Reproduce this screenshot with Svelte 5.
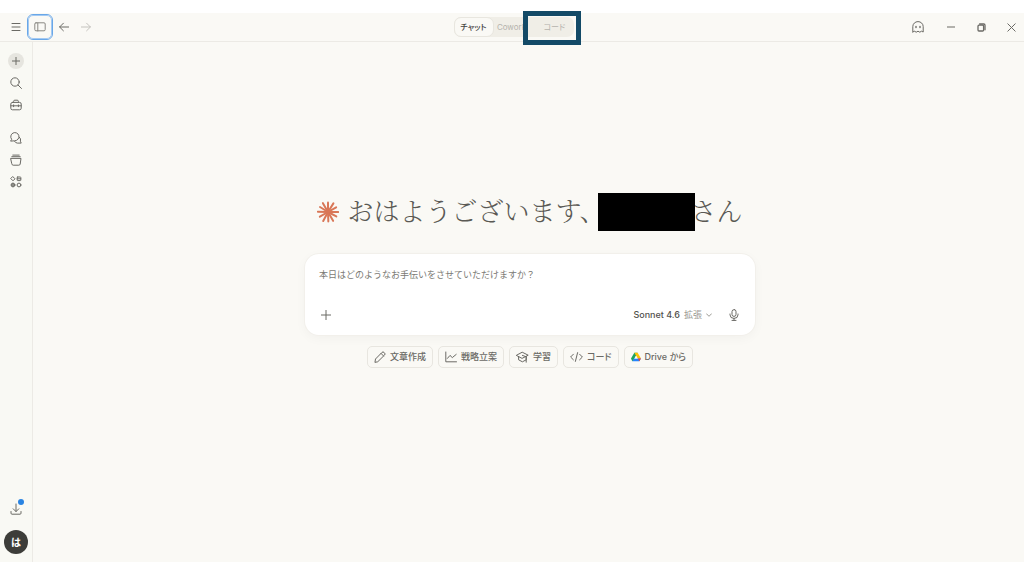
<script lang="ts">
    let message = $state('');
    let mode = $state('chat');
</script>

<div class="window">
    <header class="titlebar">
        <div class="tools">
            <button class="icon-btn" aria-label="メニュー">
                <svg width="10" height="10" viewBox="0 0 10 10"><path d="M1 1.5h8M1 5h8M1 8.5h8" /></svg>
            </button>
            <button class="icon-btn panel-btn" aria-label="サイドバー">
                <svg width="12" height="10" viewBox="0 0 12 10"><rect x="0.8" y="0.8" width="10.4" height="8" rx="1.2" /><path d="M3.8 1v8" /></svg>
            </button>
            <button class="icon-btn" aria-label="戻る">
                <svg width="10" height="10" viewBox="0 0 10 10"><path d="M9.8 5H.6M4.4 1.2.6 5l3.8 3.8" /></svg>
            </button>
            <button class="icon-btn faded" aria-label="進む">
                <svg width="10" height="10" viewBox="0 0 10 10"><path d="M.2 5h9.2M5.6 1.2 9.4 5 5.6 8.8" /></svg>
            </button>
        </div>

        <nav class="tabs">
            <button class="tab" class:active={mode === 'chat'} onclick={() => (mode = 'chat')}>チャット</button>
            <button class="tab" class:active={mode === 'cowork'} onclick={() => (mode = 'cowork')}>Cowork</button>
            <button class="tab code" class:active={mode === 'code'} onclick={() => (mode = 'code')}>コード</button>
            <span class="marker"></span>
        </nav>

        <div class="controls">
            <button class="icon-btn" aria-label="シークレットチャット">
                <svg width="12" height="12" viewBox="0 0 12 12"><path d="M.8 11V5.6a5.2 5 0 0 1 10.4 0V11l-1.7-.8-1.7 1-1.8-1-1.8 1-1.7-1z" /><path d="M4 5.4v1.2M8 5.4v1.2" stroke-width="1.4" /></svg>
            </button>
            <button class="icon-btn" aria-label="最小化">
                <svg width="8" height="8" viewBox="0 0 8 8"><path d="M.5 4h7" stroke-width="1.2" /></svg>
            </button>
            <button class="icon-btn" aria-label="元に戻す">
                <svg width="9" height="9" viewBox="0 0 9 9"><rect x="1" y="2.2" width="5.6" height="5.8" rx="1" stroke-width="1.3" /><path d="M2.6 1h4.2Q8 1 8 2.2v4.6" stroke-width="1.3" /></svg>
            </button>
            <button class="icon-btn" aria-label="閉じる">
                <svg width="9" height="9" viewBox="0 0 9 9"><path d="m.8.8 7.4 7.4M8.2.8.8 8.2" /></svg>
            </button>
        </div>
    </header>

    <div class="body">
        <aside class="sidebar">
            <button class="side-btn" aria-label="新規チャット">
                <span class="plus">
                    <svg width="8" height="8" viewBox="0 0 8 8"><path d="M4 0v8M0 4h8" /></svg>
                </span>
            </button>
            <button class="side-btn" aria-label="検索">
                <svg width="12" height="12" viewBox="0 0 12 12"><circle cx="5" cy="5" r="4.2" /><path d="m8 8 3.5 3.5" /></svg>
            </button>
            <button class="side-btn group-end" aria-label="カスタマイズ">
                <svg width="12" height="12" viewBox="0 0 12 12"><rect x=".8" y="3.4" width="10.4" height="7.4" rx="1.6" /><path d="M3.6 3.2V2.4q0-1.2 1.2-1.2h2.4q1.2 0 1.2 1.2v.8M.8 6.8h10.4M3.6 5.9v1.8M8.4 5.9v1.8" /></svg>
            </button>
            <button class="side-btn" aria-label="チャット一覧">
                <svg width="12" height="12" viewBox="0 0 12 12"><path d="M.8 8.8 1.7 7.3A4.1 4.1 0 1 1 5 8.8z" /><path d="M9.4 5.2a3.6 3.6 0 0 1 1 4l.8 1.9H7.4a3.4 3.4 0 0 1-2.8-1.7" /></svg>
            </button>
            <button class="side-btn" aria-label="プロジェクト">
                <svg width="12" height="12" viewBox="0 0 12 12"><path d="M1 4.4h10L10.2 10q-.2 1.2-1.4 1.2H3.2Q2 11.2 1.8 10zM1.8 2.7h8.4M2.8 1.1h6.4" /></svg>
            </button>
            <button class="side-btn" aria-label="アーティファクト">
                <svg width="12" height="12" viewBox="0 0 12 12"><path d="m3 .8 2 2-2 2-2-2z" /><rect x="7.2" y="1" width="3.6" height="3.6" rx=".5" /><path d="M7.2 2.8h3.6" /><circle cx="3" cy="9" r="1.9" /><path d="M3 7.3v3.4M1.3 9h3.4" /><circle cx="9" cy="9" r="1.9" /></svg>
            </button>

            <div class="side-bottom">
                <button class="side-btn download" aria-label="ダウンロード">
                    <svg width="12" height="12" viewBox="0 0 12 12"><path d="M6 1v7.400M3.2 5.8 6 8.6l2.800-2.800M1 8.5v1.700q0 1 1 1h8q1 0 1-1V8.5" /></svg>
                    <span class="dot"></span>
                </button>
                <button class="avatar">は</button>
            </div>
        </aside>

        <main>
            <h1>
                <svg class="spark" width="22" height="22" viewBox="-11 -11 22 22">
                    {#each [0, 28, 60, 88, 118, 150, 182, 212, 240, 270, 302, 330] as angle, i}
                        <path d="M0 0H{i % 2 ? 9.4 : 10.2}" transform="rotate({angle})" />
                    {/each}
                </svg>
                <span class="greeting">おはようございます、</span>
                <span class="redacted"></span>
                <span>さん</span>
            </h1>

            <div class="composer">
                <textarea aria-label="メッセージ" rows="1" placeholder="本日はどのようなお手伝いをさせていただけますか？" bind:value={message}></textarea>
                <div class="composer-row">
                    <button class="icon-btn" aria-label="追加">
                        <svg width="10" height="10" viewBox="0 0 10 10"><path d="M5 0v10M0 5h10" /></svg>
                    </button>
                    <button class="model">
                        Sonnet 4.6 <span>拡張</span>
                        <svg width="6" height="6" viewBox="0 0 6 6"><path d="m.5 1.8 2.500 2.500 2.500-2.500" /></svg>
                    </button>
                    <button class="icon-btn" aria-label="音声入力">
                        <svg width="10" height="12" viewBox="0 0 10 12"><rect x="3" y=".6" width="4" height="6.8" rx="2" /><path d="M1 5v.8a4 3.6 0 0 0 8 0V5M5 9.4v2M3 11.4h4" /></svg>
                    </button>
                </div>
            </div>

            <div class="chips">
                <button class="chip">
                    <svg width="12" height="12" viewBox="0 0 12 12"><path d="M1 11l.5-3L8 1.4q1-1 2 0l.6.6q1 1 0 2L4 10.5zM7 2.4l2.600 2.600" /></svg>
                    <span>文章作成</span>
                </button>
                <button class="chip">
                    <svg width="12" height="12" viewBox="0 0 12 12"><path d="M.8 1v9.800h10.700M2.4 7.4 5 4.4l2.300 2.200 3.900-3.200" /></svg>
                    <span>戦略立案</span>
                </button>
                <button class="chip">
                    <svg width="13" height="12" viewBox="0 0 13 12"><path d="M.6 4.2 6.2 1.2l6 3-5.800 3zM2.6 5.4v3.400l3.800 2 3.800-2V5.4M6.4 4.4l3.800 1.400v5.400" /></svg>
                    <span>学習</span>
                </button>
                <button class="chip">
                    <svg width="13" height="12" viewBox="0 0 13 12"><path d="M3.4 3.2.6 6l2.800 2.800M9.6 3.2 12.4 6 9.6 8.8M7.6 1.6 5.4 10.4" /></svg>
                    <span>コード</span>
                </button>
                <button class="chip drive">
                    <svg width="10" height="10" viewBox="0 0 12 11"><path fill="#1ea362" d="M4 .3h4L3 9.5 1.5 10.5 0 7.3z" /><path fill="#ffc107" d="M4 .3h4l4 7H8z" /><path fill="#2684fc" d="M3.6 7.3H12l-2 3.400H1.6z" /><path fill="#ea4335" d="M8.3 7.3H12l-2 3.400z" /><path fill="#faf9f5" d="M6 4 4 7.3h4z" /></svg>
                    <span>Drive から</span>
                </button>
            </div>
        </main>
    </div>
</div>

<style>
    :global(body) {
        background: #fff;
    }

    .window {
        box-sizing: border-box;
        display: flex;
        flex-direction: column;
        min-height: 100vh;
        border: solid #fff;
        border-width: 13px 0 14px;
        background: #faf9f5;
        color: #6b6a65;
        font-family: Inter, "Noto Sans CJK JP", sans-serif;
    }

    button {
        display: flex;
        align-items: center;
        justify-content: center;
        padding: 0;
        border: 0;
        background: none;
        color: inherit;
        font: inherit;
    }

    svg {
        flex: none;
        fill: none;
        stroke: currentColor;
        stroke-width: 1;
        stroke-linecap: round;
        stroke-linejoin: round;
    }

    .titlebar {
        display: grid;
        grid-template-columns: 1fr auto 1fr;
        align-items: center;
        height: 28px;
        border-bottom: 1px solid #eceae5;
    }

    .tools {
        display: flex;
        align-items: center;
        padding-left: 5px;
    }

    .icon-btn {
        width: 22px;
        height: 22px;
    }

    .panel-btn {
        width: 26px;
        height: 26px;
        box-sizing: border-box;
        border: 1px solid #69a7e8;
        border-radius: 6px;
        outline: 1px solid #a3c9f2;
        outline-offset: -2px;
        color: #8a8984;
    }

    .faded {
        color: #c4c3be;
    }

    .tabs {
        position: relative;
        display: flex;
        height: 20px;
        margin-left: 3px;
        border-radius: 7px;
        background: #f0eee7;
        color: #b5b3ad;
        font-size: 8px;
        font-feature-settings: "palt";
    }

    .tab {
        box-sizing: border-box;
        width: 36px;
        padding-bottom: 1px;
        font-feature-settings: inherit;
    }

    .tab.code {
        width: 44px;
        padding-left: 6px;
    }

    .tab.active {
        width: 40px;
        border: 1px solid #e8e6df;
        border-radius: 7px;
        background: #faf9f5;
        color: #45443f;
        font-weight: 500;
    }

    .marker {
        position: absolute;
        top: -6px;
        right: -7px;
        width: 48px;
        height: 24px;
        border: 5px solid #134a67;
        pointer-events: none;
    }

    .controls {
        display: flex;
        justify-content: flex-end;
        gap: 8px;
        padding-right: 2px;
    }

    .controls .icon-btn:first-child {
        margin-right: 3px;
    }

    .body {
        display: flex;
        flex: 1;
    }

    .sidebar {
        display: flex;
        flex-direction: column;
        align-items: center;
        width: 33px;
        padding: 8px 0;
        box-sizing: border-box;
        background: #f9f9f4;
        border-right: 1px solid #eceae5;
    }

    .side-btn {
        width: 22px;
        height: 22px;
    }

    .group-end {
        margin-bottom: 11px;
    }

    .plus {
        display: flex;
        align-items: center;
        justify-content: center;
        width: 16px;
        height: 16px;
        border-radius: 50%;
        background: #e6e5df;
    }

    .side-bottom {
        display: flex;
        flex-direction: column;
        align-items: center;
        gap: 10px;
        margin-top: auto;
    }

    .download {
        position: relative;
    }

    .dot {
        position: absolute;
        top: 1px;
        right: 3px;
        width: 6px;
        height: 6px;
        border-radius: 50%;
        background: #2a84e2;
    }

    .avatar {
        box-sizing: border-box;
        width: 24px;
        height: 24px;
        padding-bottom: 2px;
        border-radius: 50%;
        background: #3d3d39;
        color: #fff;
        font-size: 10px;
        font-weight: 700;
    }

    main {
        flex: 1;
        display: flex;
        flex-direction: column;
        align-items: center;
        padding: 151px 0 40px 3px;
    }

    h1 {
        display: flex;
        align-items: center;
        height: 38px;
        margin: 0 0 23px;
        color: #5a5954;
        font-family: "Noto Serif CJK JP", "Noto Sans CJK JP", serif;
        font-size: 26px;
        font-weight: 300;
        line-height: 34px;
        white-space: nowrap;
    }

    h1 span {
        padding-bottom: 4px;
    }

    .spark {
        margin-right: 8px;
        stroke: #d97757;
        stroke-width: 2;
    }

    .greeting {
        width: 251px;
    }

    .redacted {
        position: relative;
        box-sizing: border-box;
        width: 97px;
        height: 38px;
        margin-right: -5px;
        background: #000;
    }

    .composer {
        box-sizing: border-box;
        width: 450px;
        max-width: 90%;
        padding: 13px 10px 9px;
        border-radius: 14px;
        background: #fff;
        box-shadow: 0 0 0 1px #f2f0eb, 0 3px 12px rgba(0, 0, 0, 0.04);
    }

    textarea {
        display: block;
        box-sizing: border-box;
        width: 100%;
        height: 37px;
        padding: 0 4px;
        border: 0;
        outline: 0;
        resize: none;
        background: none;
        font: inherit;
        font-size: 9px;
        line-height: 16px;
    }

    textarea::placeholder {
        color: #7b7a74;
        opacity: 1;
    }

    .composer-row {
        display: flex;
        align-items: center;
    }

    .model {
        gap: 4px;
        margin-left: auto;
        margin-right: 11px;
        padding-bottom: 1px;
        color: #52514d;
        font-size: 9px;
        font-weight: 500;
    }

    .model span,
    .model svg {
        color: #9b9a94;
        font-weight: 400;
    }

    .model span {
        padding-bottom: 1px;
    }

    .chips {
        display: flex;
        gap: 5px;
        margin-top: 11px;
    }

    .chip {
        gap: 4px;
        height: 22px;
        padding: 0 6px;
        border: 1px solid #e8e6e0;
        border-radius: 5px;
        font-size: 9px;
        font-weight: 500;
        font-feature-settings: "palt";
        white-space: nowrap;
    }

    .chip span {
        padding-bottom: 1px;
    }

    .drive svg {
        stroke: none;
    }
</style>
